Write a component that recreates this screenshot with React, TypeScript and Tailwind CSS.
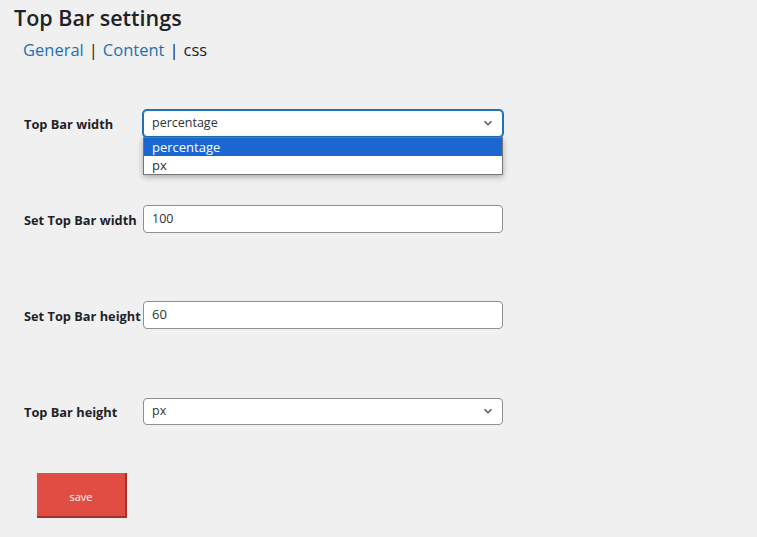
import React from "react";

const font = { fontFamily: '"Segoe UI", "Open Sans", "Noto Sans", sans-serif' };

function Chevron() {
  return (
    <svg width="12" height="12" viewBox="0 0 12 12" className="text-[#50575e]">
      <path d="M2.5 4.2 L6 7.7 L9.5 4.2" fill="none" stroke="currentColor" strokeWidth="1.5" />
    </svg>
  );
}

function Row({ label, children }: { label: string; children: React.ReactNode }) {
  return (
    <div className="flex h-[96px] items-center">
      <div className="w-[143px] shrink-0 pl-[24px] pt-[3px] text-[12.8px] font-bold text-[#1d2327] whitespace-nowrap">{label}</div>
      <div className="relative">{children}</div>
    </div>
  );
}

export default function App() {
  return (
    <div className="min-h-[537px] w-[757px] bg-[#f0f0f1] text-[#1d2327]" style={font}>
      <h2 className="pl-[14px] pt-[4px] text-[21.5px] font-semibold leading-[27px]">Top Bar settings</h2>
      <div className="mt-[8px] pl-[23px] text-[16.5px] leading-[22px]">
        <span className="text-[#2271b1]">General</span>
        <span className="mx-[5px]">|</span>
        <span className="text-[#2271b1]">Content</span>
        <span className="mx-[5px]">|</span>
        <span>css</span>
      </div>
      <div className="mt-[14px]">
        <Row label="Top Bar width">
          <div className="flex h-[27px] w-[360px] items-center justify-between rounded-[4px] border border-[#2271b1] bg-white pl-[8px] pr-[8px] text-[12.5px] text-[#2c3338] shadow-[0_0_0_1px_#2271b1]">
            <span>percentage</span>
            <Chevron />
          </div>
          <div className="absolute left-0 top-[27px] z-10 w-[360px] border border-[#767676] bg-white text-[13px] leading-[18px] shadow-[0_2px_6px_rgba(0,0,0,0.3)]">
            <div className="bg-[#1a67d2] pl-[8px] text-white">percentage</div>
            <div className="pl-[8px] text-[#2c3338]">px</div>
          </div>
        </Row>
        <Row label="Set Top Bar width">
          <div className="flex h-[28px] w-[360px] items-center rounded-[4px] border border-[#8c8f94] bg-white pl-[8px] text-[12.5px] text-[#2c3338]">100</div>
        </Row>
        <Row label="Set Top Bar height">
          <div className="flex h-[28px] w-[360px] items-center rounded-[4px] border border-[#8c8f94] bg-white pl-[8px] text-[13px] text-[#2c3338]">60</div>
        </Row>
        <Row label="Top Bar height">
          <div className="flex h-[27px] w-[360px] items-center justify-between rounded-[4px] border border-[#8c8f94] bg-white pl-[8px] pr-[8px] text-[12.5px] text-[#2c3338]">
            <span>px</span>
            <Chevron />
          </div>
        </Row>
      </div>
      <div className="ml-[37px] mt-[14px] flex h-[45px] w-[90px] items-center justify-center border-b-2 border-r-2 border-[#a8302a] bg-[#e14d43] pt-[6px] text-[11px] text-white">
        save
      </div>
    </div>
  );
}
